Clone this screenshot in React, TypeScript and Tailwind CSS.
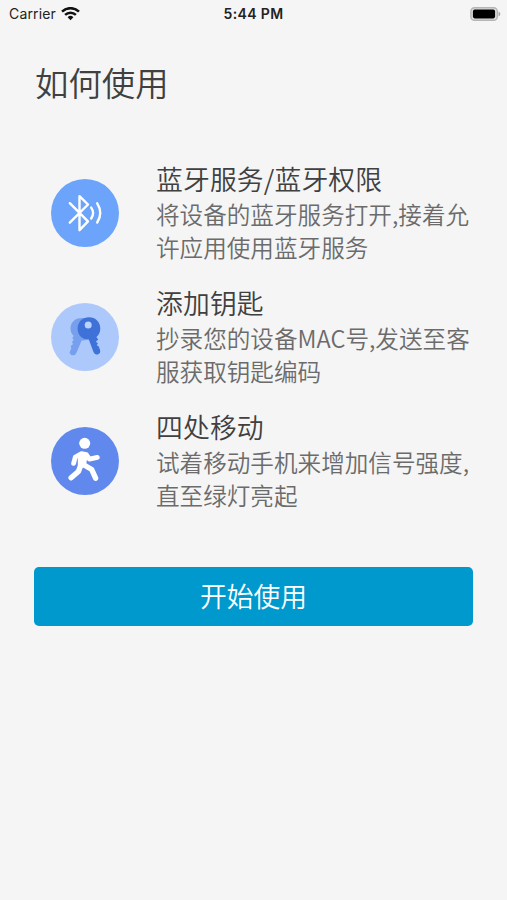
import type { ReactNode } from "react";

function WifiIcon() {
  return (
    <svg className="h-[14px] w-[19px]" viewBox="0 0 19 14" fill="none" stroke="#111" strokeWidth="2.5">
      <path d="M1 4.6A12.2 12.2 0 0 1 18 4.6" />
      <path d="M4.1 7.9A7.8 7.8 0 0 1 14.9 7.9" />
      <path d="M6.6 10.3A4.1 4.1 0 0 1 12.4 10.3L9.5 13.2Z" fill="#111" stroke="none" />
    </svg>
  );
}

function BatteryIcon() {
  return (
    <svg className="h-[14px] w-[31px]" viewBox="0 0 31 14">
      <rect x="0.9" y="0.7" width="26.4" height="12.6" rx="3.6" fill="#dedede" stroke="#b5b5b5" strokeWidth="1.4" />
      <rect x="2.9" y="2.6" width="22.2" height="8.8" rx="1.8" fill="#000" />
      <path d="M28.5 4.6Q30.4 5.3 30.4 7T28.5 9.4Z" fill="#aaa" />
    </svg>
  );
}

function BluetoothIcon() {
  return (
    <svg className="size-[68px]" viewBox="0 0 68 68" fill="none" stroke="#fff" strokeWidth="2.4" strokeLinecap="round" strokeLinejoin="round">
      <circle cx="34" cy="34" r="34" fill="#6ba4fa" stroke="none" />
      <path d="M18.8 24.2L37 42.3L28.5 51.2V17.2L37 25.5L18.8 43.7" />
      <path d="M40.2 28.6Q44 34 40.2 39.5" />
      <path d="M46.2 24.3Q52.3 34 46.2 43.5" />
    </svg>
  );
}

function KeysIcon() {
  return (
    <svg className="size-[68px]" viewBox="0 0 68 68">
      <circle cx="34" cy="34" r="34" fill="#adc8fa" />
      <path
        fill="#76a0ee"
        d="M31 15C23.5 15 19.5 20 19.5 25.5C19.5 29 21 31.3 22.7 33L21.3 35L22.6 37L20.9 39L22.2 41L19.7 43L20.3 45.2L18.6 49.4Q19.2 52 21.8 52.2Q24.4 52.4 25.6 49.4L30.6 37.4Q36 38 39.2 34V15Z"
      />
      <path
        fill="#3f72d8"
        d="M38 14.3C31 14.3 26.6 19.3 26.6 25.6C26.6 32.4 31.4 36.8 37.8 36.6L42.6 49.2Q44 52.2 46.8 51.4Q49.7 50.4 49.1 47.2L47.8 43.6L45.8 42.2L46.9 40.2L44.8 38.7L47.2 36.4L45.4 34.1C48 32 49.3 29 49.3 25.5C49.3 19 44.5 14.3 38 14.3Z"
      />
      <circle cx="37.2" cy="22" r="3.5" fill="#b9d2ff" />
    </svg>
  );
}

function WalkIcon() {
  return (
    <svg className="size-[68px]" viewBox="0 0 68 68" fill="none" stroke="#fff" strokeLinecap="round" strokeLinejoin="round">
      <circle cx="34" cy="34" r="34" fill="#6189ed" stroke="none" />
      <circle cx="33.7" cy="16.3" r="5.5" fill="#fff" stroke="none" />
      <path d="M22.6 36.4L24.3 30L30.5 26.6L35.3 27.6L38.4 32.2L46.3 30.4" strokeWidth="4.8" />
      <path d="M28.3 27.7L35.2 28.2L33.4 38.8L28.3 38.7Z" fill="#fff" strokeWidth="3" />
      <path d="M29.9 38L27.4 44.5L20.1 50.8" strokeWidth="5.4" />
      <path d="M31.4 37L40.7 42.5L44.6 51.2" strokeWidth="5.4" />
    </svg>
  );
}

const steps: { icon: ReactNode; title: string; lines: string[] }[] = [
  { icon: <BluetoothIcon />, title: "蓝牙服务/蓝牙权限", lines: ["将设备的蓝牙服务打开,接着允", "许应用使用蓝牙服务"] },
  { icon: <KeysIcon />, title: "添加钥匙", lines: ["抄录您的设备MAC号,发送至客", "服获取钥匙编码"] },
  { icon: <WalkIcon />, title: "四处移动", lines: ["试着移动手机来增加信号强度,", "直至绿灯亮起"] },
];

export default function App() {
  return (
    <div className="flex h-[900px] w-[507px] flex-col bg-[#f5f5f5] font-['Noto_Sans_CJK_SC',sans-serif] font-[350] text-[#404040]">
      <header className="grid h-[27px] grid-cols-3 items-center pr-[6px] pl-[9px] font-['Inter',sans-serif] text-[14px] text-[#222]">
        <div className="flex items-center gap-[5px] font-normal">
          <span className="tracking-[0.15px]">Carrier</span>
          <WifiIcon />
        </div>
        <span className="pr-[3px] text-center font-semibold tracking-[0.35px] whitespace-nowrap">5:44 PM</span>
        <div className="flex justify-end">
          <BatteryIcon />
        </div>
      </header>

      <main className="flex flex-col px-[34px]">
        <h1 className="mt-[30px] pl-px text-[33.4px] leading-[50px] font-[350]">如何使用</h1>
        <ul className="mt-[52px] flex flex-col gap-[17px]">
          {steps.map((step) => (
            <li key={step.title} className="flex h-[107px] items-center gap-[37px] pl-[17px]">
              <div className="shrink-0">{step.icon}</div>
              <div className="pb-[2px] whitespace-nowrap">
                <h2 className="text-[26.8px] leading-[39px] font-[350] tracking-[0.15px]">{step.title}</h2>
                <p className="text-[23.6px] leading-[33px] text-[#6b6b6b]">
                  {step.lines.map((line) => (
                    <span key={line} className="block">{line}</span>
                  ))}
                </p>
              </div>
            </li>
          ))}
        </ul>
        <button className="mt-[53px] h-[59px] w-[439px] rounded-[5px] bg-[#0099ce] pb-[2px] text-[26.8px] leading-[57px] font-[350] text-white">
          开始使用
        </button>
      </main>
    </div>
  );
}
